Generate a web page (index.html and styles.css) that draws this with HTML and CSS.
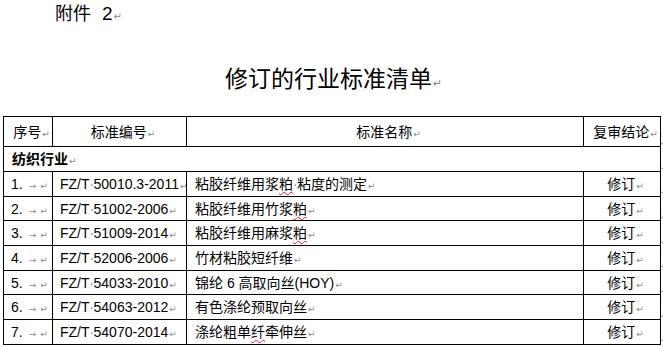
FILE: index.html
```html
<!DOCTYPE html>
<html lang="zh-CN">
<head>
<meta charset="utf-8">
<title>修订的行业标准清单</title>
<link rel="stylesheet" href="styles.css">
</head>
<body>
<div class="doc">
  <p class="annex">附件 <span class="num">2</span><span class="pm">↵</span></p>
  <h1 class="title">修订的行业标准清单<span class="pm">↵</span></h1>
  <table class="list">
    <colgroup>
      <col class="c-no"><col class="c-code"><col class="c-name"><col class="c-res"><col class="c-end">
    </colgroup>
    <tr class="head">
      <td class="ctr">序号<span class="pm">↵</span></td>
      <td class="ctr">标准编号<span class="pm">↵</span></td>
      <td class="ctr">标准名称<span class="pm">↵</span></td>
      <td class="ctr">复审结论<span class="pm">↵</span></td>
      <td class="end"><span class="pm">↵</span></td>
    </tr>
    <tr class="cat">
      <td colspan="4"><b>纺织行业</b><span class="pm">↵</span></td>
      <td class="end"><span class="pm">↵</span></td>
    </tr>
    <tr class="row">
      <td>1.<span class="tab">→</span><span class="pm">↵</span></td>
      <td>FZ/T<span class="sp">·</span>50010.3-2011<span class="pm">↵</span></td>
      <td>粘胶纤维用浆<span class="typo">粕</span><span class="sp">·</span>粘度的测定<span class="pm">↵</span></td>
      <td class="ctr">修订<span class="pm">↵</span></td>
      <td class="end"><span class="pm">↵</span></td>
    </tr>
    <tr class="row">
      <td>2.<span class="tab">→</span><span class="pm">↵</span></td>
      <td>FZ/T<span class="sp">·</span>51002-2006<span class="pm">↵</span></td>
      <td>粘胶纤维用竹浆<span class="typo">粕</span><span class="pm">↵</span></td>
      <td class="ctr">修订<span class="pm">↵</span></td>
      <td class="end"><span class="pm">↵</span></td>
    </tr>
    <tr class="row">
      <td>3.<span class="tab">→</span><span class="pm">↵</span></td>
      <td>FZ/T<span class="sp">·</span>51009-2014<span class="pm">↵</span></td>
      <td>粘胶纤维用麻浆<span class="typo">粕</span><span class="pm">↵</span></td>
      <td class="ctr">修订<span class="pm">↵</span></td>
      <td class="end"><span class="pm">↵</span></td>
    </tr>
    <tr class="row">
      <td>4.<span class="tab">→</span><span class="pm">↵</span></td>
      <td>FZ/T<span class="sp">·</span>52006-2006<span class="pm">↵</span></td>
      <td>竹材粘胶短纤维<span class="pm">↵</span></td>
      <td class="ctr">修订<span class="pm">↵</span></td>
      <td class="end"><span class="pm">↵</span></td>
    </tr>
    <tr class="row">
      <td>5.<span class="tab">→</span><span class="pm">↵</span></td>
      <td>FZ/T<span class="sp">·</span>54033-2010<span class="pm">↵</span></td>
      <td>锦纶 6 高取向丝(HOY)<span class="pm">↵</span></td>
      <td class="ctr">修订<span class="pm">↵</span></td>
      <td class="end"><span class="pm">↵</span></td>
    </tr>
    <tr class="row">
      <td>6.<span class="tab">→</span><span class="pm">↵</span></td>
      <td>FZ/T<span class="sp">·</span>54063-2012<span class="pm">↵</span></td>
      <td>有色涤纶预取向丝<span class="pm">↵</span></td>
      <td class="ctr">修订<span class="pm">↵</span></td>
      <td class="end"><span class="pm">↵</span></td>
    </tr>
    <tr class="row">
      <td>7.<span class="tab">→</span><span class="pm">↵</span></td>
      <td>FZ/T<span class="sp">·</span>54070-2014<span class="pm">↵</span></td>
      <td>涤纶粗单<span class="typo">纤</span>牵伸丝<span class="pm">↵</span></td>
      <td class="ctr">修订<span class="pm">↵</span></td>
      <td class="end"><span class="pm">↵</span></td>
    </tr>
  </table>
</div>
</body>
</html>
```
FILE: styles.css
```css
html, body {
  margin: 0;
  padding: 0;
  background: #ffffff;
}
body {
  font-family: "Liberation Sans", "Noto Sans CJK SC", sans-serif;
  color: #000000;
  overflow: hidden;
}
.doc {
  width: 663px;
  height: 347px;
  overflow: hidden;
}
.annex {
  margin: 0;
  padding: 5px 0 0 55px;
  font-size: 18px;
  line-height: 18px;
}
.annex .num {
  margin-left: 6px;
  font-size: 19px;
}
.title {
  margin: 42px 0 0 0;
  text-align: center;
  font-size: 23px;
  line-height: 23px;
  font-weight: normal;
  padding-left: 4px;
}
.pm {
  font-family: "DejaVu Sans", sans-serif;
  color: #8a8a8a;
  font-size: 9px;
  font-weight: normal;
  margin-left: 1px;
  vertical-align: 0;
}
.title .pm {
  font-size: 11px;
}
.annex .pm {
  font-size: 10px;
}
.tab {
  font-family: "DejaVu Sans", sans-serif;
  color: #8a8a8a;
  font-size: 9px;
  margin-left: 6px;
  margin-right: 3px;
}
.sp {
  color: #8a8a8a;
  display: inline-block;
  width: 4px;
  text-align: center;
}
.typo {
  text-decoration: underline wavy #e02020;
  text-decoration-thickness: 1px;
  text-underline-offset: 2px;
}
.list {
  margin: 21px 0 0 3px;
  border-collapse: collapse;
  table-layout: fixed;
  width: 663px;
  font-size: 14px;
  line-height: 16px;
}
.c-no { width: 49px; }
.c-code { width: 134px; }
.c-name { width: 397px; }
.c-res { width: 77px; }
.c-end { width: 6px; }
.list td {
  border: 1px solid #000000;
  padding: 2px 0 0 7px;
  white-space: nowrap;
  overflow: hidden;
  vertical-align: middle;
}
.list td.end {
  border: none;
  padding: 0;
  vertical-align: bottom;
  line-height: 8px;
}
.list td.end .pm {
  font-size: 5px;
  margin-left: 0;
}
.list td.ctr {
  text-align: center;
}
.head td {
  height: 27px;
}
.cat td {
  height: 22px;
  padding-left: 8px;
}
.cat b {
  font-weight: bold;
}
.row td {
  height: 21.7px;
}
.row td:first-child {
  padding-left: 7px;
}
.row td:nth-child(3) {
  padding-left: 8px;
}
```
